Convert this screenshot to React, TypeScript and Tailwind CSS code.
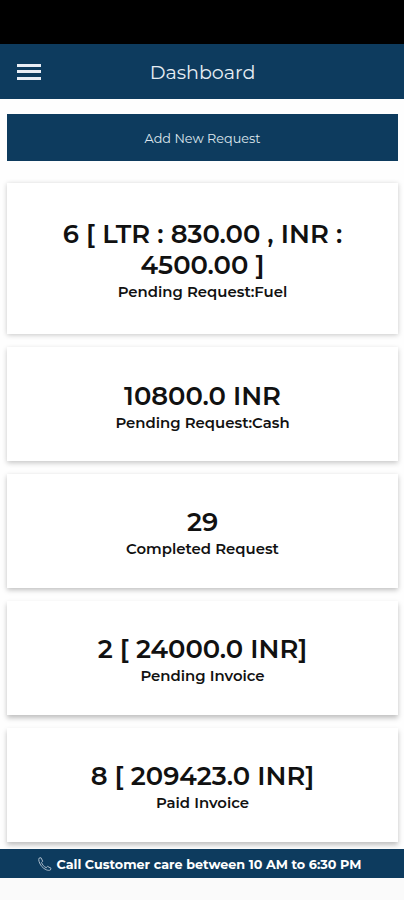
import { clsx } from 'clsx'

interface Stat {
  lines: string[]
  label: string
  padding?: string
  shadow: string
}

// Elevation shadows get a bit longer further down the list
const STATS: Stat[] = [
  {
    lines: ['6 [ LTR : 830.00 , INR :', '4500.00 ]'],
    label: 'Pending Request:Fuel',
    padding: 'pt-[35.4px] pb-[30.8px]',
    shadow: 'shadow-[0_1px_5px_rgba(0,0,0,0.22)]',
  },
  {
    lines: ['10800.0 INR'],
    label: 'Pending Request:Cash',
    shadow: 'shadow-[0_2px_5px_rgba(0,0,0,0.22)]',
  },
  {
    lines: ['29'],
    label: 'Completed Request',
    shadow: 'shadow-[0_2px_5px_rgba(0,0,0,0.25)]',
  },
  {
    lines: ['2 [ 24000.0 INR]'],
    label: 'Pending Invoice',
    shadow: 'shadow-[0_3px_5px_rgba(0,0,0,0.25)]',
  },
  {
    lines: ['8 [ 209423.0 INR]'],
    label: 'Paid Invoice',
    shadow: 'shadow-[0_3px_5px_rgba(0,0,0,0.25)]',
  },
]

function StatCard({ lines, label, padding = 'pt-[32.4px] pb-[27.5px]', shadow }: Stat) {
  return (
    <div className={clsx('bg-white text-center text-[#111] whitespace-nowrap', padding, shadow)}>
      {lines.map((line) => (
        <p key={line} className="text-[25.8px] leading-[31px] font-semibold">
          {line}
        </p>
      ))}
      <p className="pt-[2px] text-[14.9px] leading-[21px] font-semibold">{label}</p>
    </div>
  )
}

function PhoneIcon() {
  return (
    <svg
      viewBox="0 0 14 14"
      className="w-3.5 h-3.5 shrink-0"
      fill="none"
      stroke="#a9bac9"
      strokeWidth="1"
      strokeLinejoin="round"
    >
      <path d="M1 1.2 L3 .7 L4.7 4.2 L3.5 5.4 C4.2 7.6 6 9.7 8.2 10.7 L9.5 9.4 L13 11.2 L12.4 13 C11.4 13.6 9.7 13.4 8.3 12.8 C4.7 11.3 2 8 1 4.3 C.7 3.1.6 1.9 1 1.2 Z" />
    </svg>
  )
}

export default function App() {
  return (
    <div className="flex h-[900px] w-[404px] flex-col overflow-hidden bg-[#fefefe] font-['Montserrat','Inter',sans-serif]">
      <div className="h-11 shrink-0 bg-black" />

      <header className="grid h-[55px] shrink-0 grid-cols-[56px_1fr_56px] items-center bg-[#0d3b5e] text-white">
        <button aria-label="Menu" className="flex flex-col gap-[3.5px] pl-[17px] pr-[15px]">
          <span className="h-[3px] w-full bg-[#e9eef6]" />
          <span className="h-[3px] w-full bg-[#e9eef6]" />
          <span className="h-[3px] w-full bg-[#e9eef6]" />
        </button>
        <h1 className="pt-[2px] pl-px text-center text-[19.1px] leading-6 font-normal text-[#e6edf3]">
          Dashboard
        </h1>
      </header>

      <main className="flex flex-1 flex-col px-[7px] pt-[15px] pr-1.5">
        <button className="h-[47px] shrink-0 bg-[#0d3b5e] pt-[2px] text-[12.8px] text-[#dfe7ee]">
          Add New Request
        </button>
        <div className="mt-[22px] flex flex-col gap-[13px]">
          {STATS.map((stat) => (
            <StatCard key={stat.label} {...stat} />
          ))}
        </div>
      </main>

      <footer className="relative flex h-[29px] shrink-0 items-center justify-center gap-[5px] bg-[#0d3b5e] pr-[5px]">
        <PhoneIcon />
        <span className="pt-[2px] text-[12.75px] font-bold whitespace-nowrap text-white">
          Call Customer care between 10 AM to 6:30 PM
        </span>
      </footer>
      <div className="h-[22px] shrink-0 bg-[#fafafa]" />
    </div>
  )
}
